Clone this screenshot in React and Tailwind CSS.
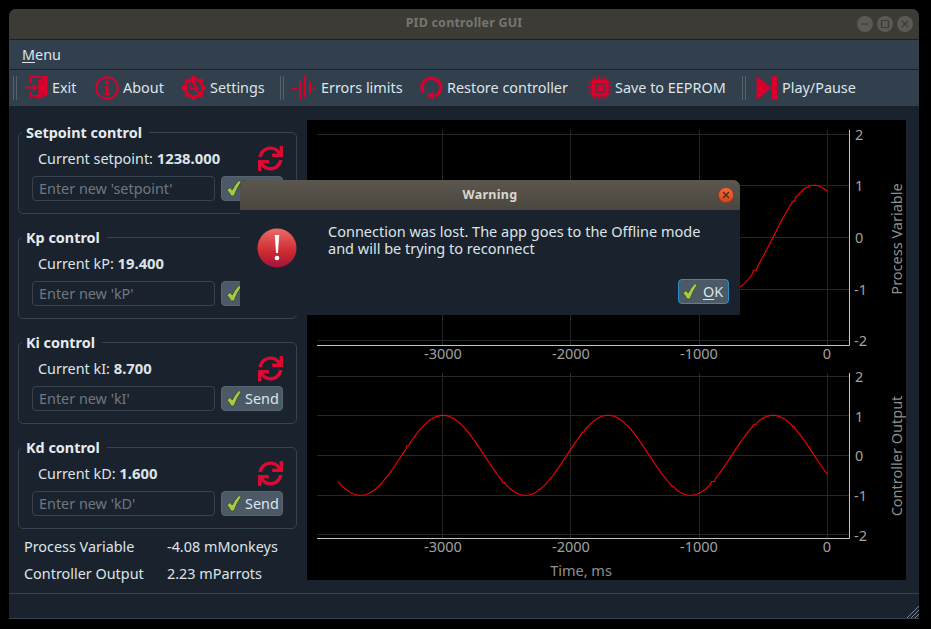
import { FaSync } from 'react-icons/fa'

const RED = '#d9002c'
const KINKS = [408, 453, 504, 540, 583, 627, 673, 713, 755, 793]

function curve(fn) {
  const pts = []
  for (let x = 338; x <= 827; x += 1.5) {
    const k = KINKS.find(v => Math.abs(v - x) < 2)
    pts.push(`${x},${fn(k ?? x).toFixed(1)}`)
  }
  return pts.join(' ')
}

function Chart({ gridY, labelsY, top, bottom, xLabelY, path, title, titleY }) {
  return (
    <g>
      {gridY.map(y => (
        <line key={y} x1="317" x2="849" y1={y} y2={y} stroke="#262626" />
      ))}
      {[442.5, 570.5, 699.5, 827.5].map(x => (
        <line key={x} x1={x} x2={x} y1={top} y2={bottom} stroke="#262626" />
      ))}
      <polyline points={path} fill="none" stroke="#ff0000" strokeWidth="1.1" />
      <path d={`M317 ${bottom + 0.5}H849.5V${top}`} fill="none" stroke="#c4c4c4" />
      {[['-3000', 443], ['-2000', 571], ['-1000', 699], ['0', 827]].map(([t, x]) => (
        <text key={t} x={x} y={xLabelY} textAnchor="middle" fill="#a0a0a0" className="text-[14.5px]">{t}</text>
      ))}
      {['2', '1', '0', '-1', '-2'].map((t, i) => (
        <text key={t} x={t.length > 1 ? 854 : 855} y={labelsY[i]} fill="#a0a0a0" className="text-[14.5px]">{t}</text>
      ))}
      <text
        transform={`translate(902 ${titleY}) rotate(-90)`}
        textAnchor="middle"
        fill="#8f8f8f"
        className="text-[14.5px]"
      >
        {title}
      </text>
    </g>
  )
}

function Plots() {
  const topPath = curve(x => 237.3 - 52 * Math.sin((2 * Math.PI * (x - 773)) / 165))
  const bottomPath = curve(x => 455.3 - 40 * Math.cos((2 * Math.PI * (x - 443)) / 165))
  return (
    <div className="w-[599px] h-[460px] bg-black overflow-hidden">
      <svg width="599" height="460" viewBox="307 120 599 460" style={{ fontFamily: '"Noto Sans", sans-serif' }}>
        <Chart
          gridY={[134.5, 185.5, 237.5, 289.5, 340.5]}
          labelsY={[140, 191, 243, 295, 346]}
          top={130}
          bottom={345}
          xLabelY={359}
          path={topPath}
          title="Process Variable"
          titleY={239}
        />
        <Chart
          gridY={[376.5, 415.5, 455.5, 495.5, 534.5]}
          labelsY={[382, 422, 461, 501, 541]}
          top={373}
          bottom={538}
          xLabelY={552}
          path={bottomPath}
          title="Controller Output"
          titleY={456}
        />
        <text x="581" y="576" textAnchor="middle" fill="#8f8f8f" className="text-[14.5px]">Time, ms</text>
      </svg>
    </div>
  )
}

function Check({ className = '' }) {
  return (
    <svg viewBox="0 0 16 17" className={`w-[16px] h-[17px] shrink-0 ${className}`}>
      <path
        d="M0.8 10 L4.2 7.5 L6.2 10 Q8.5 5 12.8 0.6 L15.4 1.6 Q11 7.5 8 16 L5 16 Q3.5 12.5 0.8 10Z"
        fill="#a9c746"
        stroke="#39452f"
        strokeWidth="0.8"
      />
    </svg>
  )
}

function ControlGroup({ title, label, value, name }) {
  return (
    <fieldset className="w-[278px] h-[92px] border border-[#36434e] rounded-[5px]">
      <legend className="ml-[3px] pl-[4px] pr-[7px] h-[21px] leading-[21px] font-bold text-[#e6ebef]">{title}</legend>
      <div className="px-[13px]">
        <div className="flex items-center justify-between h-[30px] mb-[3px] pl-[6px]">
          <span>
            {label}: <b className="font-bold text-[14.8px]">{value}</b>
          </span>
          <FaSync className="w-[25px] h-[25px] text-[#dc0a33]" />
        </div>
        <div className="flex gap-[6px]">
          <input
            placeholder={`Enter new '${name}'`}
            className="w-[183px] h-[25px] px-[6px] border border-[#36434e] rounded-[4px] bg-transparent outline-none placeholder:text-[#6d7882]"
          />
          <button className="flex items-center gap-[3px] w-[62px] h-[25px] pl-[4px] rounded-[4px] bg-[#4c5a67] border border-[#566470]">
            <Check />
            Send
          </button>
        </div>
      </div>
    </fieldset>
  )
}

function Handle() {
  return <div className="w-[4px] h-[24px] shrink-0 border-x border-[#57626d]" />
}

function Tool({ icon, label, className }) {
  return (
    <div className={`flex items-center shrink-0 whitespace-nowrap ${className}`}>
      <svg viewBox="0 0 24 24" className="w-[24px] h-[24px] shrink-0">{icon}</svg>
      <span>{label}</span>
    </div>
  )
}

const gearTeeth = [0, 45, 90, 135, 180, 225, 270, 315]

const icons = {
  exit: (
    <g fill={RED}>
      <path d="M13.3 4 22.5 0V19L13.3 23.5Z" />
      <path d="M5.5 7V1H22M5.5 16V20H13" fill="none" stroke={RED} strokeWidth="2" />
      <path d="M0 10.5H8V7L12.5 11.5 8 16V12.5H0Z" />
    </g>
  ),
  about: (
    <g>
      <circle cx="12" cy="12" r="10.8" fill="none" stroke={RED} strokeWidth="2" />
      <circle cx="12" cy="6.5" r="1.9" fill={RED} />
      <path d="M9.5 10H13.5V17H15V19H9.5V17H11V12H9.5Z" fill={RED} />
    </g>
  ),
  settings: (
    <g>
      <circle cx="12" cy="12" r="8.8" fill="none" stroke={RED} strokeWidth="3" />
      {gearTeeth.map(a => (
        <rect key={a} x="10" y="0" width="4" height="4" fill={RED} transform={`rotate(${a} 12 12)`} />
      ))}
      <path d="M7.5 9.5A3.6 3.6 0 0 0 12.5 12.5L17.5 17.5M9.5 6.5A3.6 3.6 0 0 1 13.5 10.5L16 13" fill="none" stroke={RED} strokeWidth="2.2" />
    </g>
  ),
  errors: (
    <path
      d="M0 12.5H5M8 5V23M13 0V21M18 6V18M21 12.5H24"
      fill="none"
      stroke={RED}
      strokeWidth="2"
    />
  ),
  restore: (
    <g>
      <path d="M3.5 16.5A9.3 9.3 0 1 1 15 20" fill="none" stroke={RED} strokeWidth="3.4" />
      <path d="M6 19.5 14 15.5V24Z" fill={RED} />
    </g>
  ),
  save: (
    <g>
      <rect x="3.5" y="3.5" width="17" height="17" rx="1.5" fill={RED} />
      <rect x="8" y="8" width="8" height="8" fill="none" stroke="#323f4d" strokeWidth="1.4" />
      <path
        d="M7 0V24M10.3 0V24M13.7 0V24M17 0V24M0 7H24M0 10.3H24M0 13.7H24M0 17H24"
        stroke={RED}
        strokeWidth="1.2"
        strokeDasharray="4 16 4"
        fill="none"
      />
    </g>
  ),
  play: (
    <g fill={RED}>
      <path d="M1.5 1 Q1.5 0 2.5 0.5 L16 12 2.5 23.5 Q1.5 24 1.5 23Z" />
      <rect x="17" y="0" width="5" height="24" rx="1.2" />
    </g>
  ),
}

function Dialog() {
  return (
    <div className="absolute left-[231px] top-[171px] w-[500px] h-[135px] bg-[#1a232d] rounded-t-[7px]">
      <div className="relative flex items-center justify-center h-[30px] rounded-t-[7px] bg-linear-to-b from-[#5b574f] to-[#4a4740]">
        <span className="font-bold text-[12.5px] text-[#d9d6d0] tracking-[0.3px]">Warning</span>
        <div className="absolute right-[6px] top-[7px] flex items-center justify-center w-[16px] h-[16px] rounded-full bg-linear-to-b from-[#ee6b3c] to-[#d5481d] border border-[#a23c1c]">
          <svg viewBox="0 0 8 8" className="w-[8px] h-[8px]">
            <path d="M1 1 7 7M7 1 1 7" stroke="#4a2a1a" strokeWidth="1.2" />
          </svg>
        </div>
      </div>
      <div className="flex pt-[13px] pl-[17px]">
        <svg viewBox="0 0 40 40" className="w-[40px] h-[40px] mt-[5px] shrink-0">
          <defs>
            <linearGradient id="err" x1="0" y1="0" x2="0" y2="1">
              <stop offset="0" stopColor="#ee6a66" />
              <stop offset="0.6" stopColor="#cc2a30" />
              <stop offset="1" stopColor="#a0143a" />
            </linearGradient>
          </defs>
          <circle cx="20" cy="20" r="19.5" fill="url(#err)" />
          <path d="M17.8 7H22.2L21 25H19Z" fill="#fff" />
          <circle cx="20" cy="30" r="2.3" fill="#fff" />
        </svg>
        <p className="ml-[31px] leading-[17px] w-[420px] text-[14.5px]">
          Connection was lost. The app goes to the Offline mode
          <br />
          and will be trying to reconnect
        </p>
      </div>
      <button className="absolute right-[11px] bottom-[11px] flex items-center gap-[5px] w-[51px] h-[25px] pl-[3px] rounded-[4px] bg-[#4c5a67] border border-[#2d8ec6]">
        <Check />
        <span><span className="underline underline-offset-2">O</span>K</span>
      </button>
    </div>
  )
}

export default function App() {
  return (
    <div
      className="w-[931px] h-[629px] bg-black pl-[9px] pt-[9px] text-[14.4px] text-[#dde4e9]"
      style={{ fontFamily: '"Noto Sans", sans-serif' }}
    >
      <div className="relative flex flex-col w-[910px] h-[610px] bg-[#1a232d] rounded-t-[7px] overflow-hidden">
        <div className="relative flex items-center justify-center h-[30px] shrink-0 bg-[#3d3b36] border-b border-[#3d3b36]">
          <span className="font-bold text-[12.5px] text-[#77756f] tracking-[0.2px]">PID controller GUI</span>
          <div className="absolute right-[6px] top-[7px] flex gap-[4px]">
            {['M4 8H12', 'M4.5 4.5H11.5V11.5H4.5Z', 'M5 5 11 11M11 5 5 11'].map(d => (
              <svg key={d} viewBox="0 0 16 16" className="w-[16px] h-[16px]">
                <circle cx="8" cy="8" r="8" fill="#5b5a55" />
                <path d={d} fill="none" stroke="#3d3b36" strokeWidth="1.2" />
              </svg>
            ))}
          </div>
        </div>

        <div className="flex items-center h-[31px] shrink-0 pl-[13px] bg-[#323f4d] border-y border-[#19222b]">
          <span><span className="underline underline-offset-2">M</span>enu</span>
        </div>

        <div className="flex items-center h-[36px] shrink-0 pl-[4px] bg-[#323f4d]">
          <Handle />
          <Tool className="ml-[8px] w-[70px] gap-[3px]" icon={icons.exit} label="Exit" />
          <Tool className="w-[87px] gap-[4px]" icon={icons.about} label="About" />
          <Tool className="w-[98px] gap-[4px]" icon={icons.settings} label="Settings" />
          <Handle />
          <Tool className="ml-[8px] w-[128px] gap-[5px]" icon={icons.errors} label="Errors limits" />
          <Tool className="w-[168px] gap-[3px]" icon={icons.restore} label="Restore controller" />
          <Tool className="w-[154px] gap-[3px]" icon={icons.save} label="Save to EEPROM" />
          <Handle />
          <Tool className="ml-[9px] gap-[3px]" icon={icons.play} label="Play/Pause" />
        </div>

        <div className="flex flex-1 min-h-0">
          <div className="w-[298px] shrink-0 pl-[9px] pt-[16px]">
            <div className="flex flex-col gap-[13px]">
              <ControlGroup title="Setpoint control" label="Current setpoint" value="1238.000" name="setpoint" />
              <ControlGroup title="Kp control" label="Current kP" value="19.400" name="kP" />
              <ControlGroup title="Ki control" label="Current kI" value="8.700" name="kI" />
              <ControlGroup title="Kd control" label="Current kD" value="1.600" name="kD" />
            </div>
            <div className="grid grid-cols-[143px_1fr] auto-rows-[27px] items-center mt-[4px] pl-[6px]">
              <span>Process Variable</span>
              <span>-4.08 mMonkeys</span>
              <span>Controller Output</span>
              <span>2.23 mParrots</span>
            </div>
          </div>
          <div className="pt-[14px]">
            <Plots />
          </div>
        </div>

        <div className="relative h-[26px] shrink-0 border-y border-[#36434e]">
          <svg viewBox="0 0 12 12" className="absolute right-0 bottom-0 w-[12px] h-[12px]">
            <path d="M0 12 12 0M4 12 12 4M8 12 12 8" stroke="#7b8792" strokeWidth="1" />
          </svg>
        </div>

        <Dialog />
      </div>
    </div>
  )
}
